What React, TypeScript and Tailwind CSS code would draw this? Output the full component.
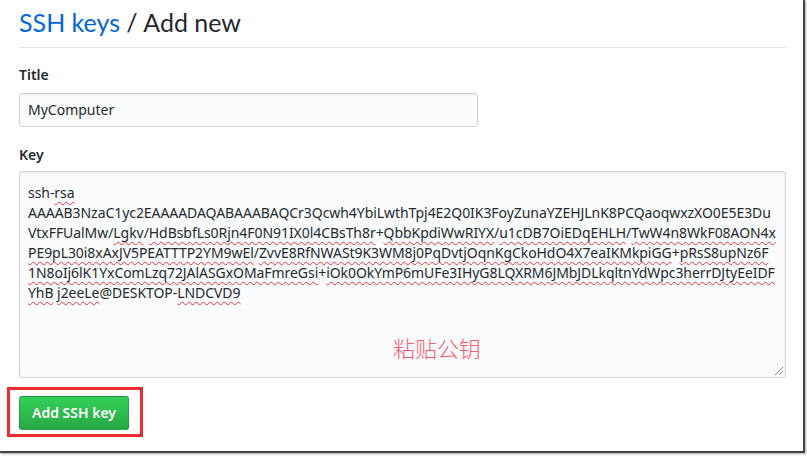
import React from "react";

const U = ({ children }: { children: React.ReactNode }) => (
  <span className="underline decoration-wavy decoration-[#e8343c] decoration-1 underline-offset-[3px]">
    {children}
  </span>
);

export default function App() {
  const body = { fontFamily: '"Noto Sans", "Open Sans", sans-serif' };
  return (
    <div className="w-[807px] h-[456px] bg-white overflow-hidden" style={body}>
      <div className="w-[805px] h-[453px] border-r-2 border-b-2 border-[#454545] shadow-[1px_1px_2px_rgba(0,0,0,0.35)] bg-white px-[19px] pt-[5px]">
        <div className="w-[767px] border-b border-[#e1e4e8] pb-[10px]">
          <h1
            className="text-[25px] leading-[32px] font-normal text-[#24292e] pt-[1px] h-[32px]"
            style={{ fontFamily: 'Lato, "Noto Sans", sans-serif' }}
          >
            <span className="text-[#0366d6]">SSH keys</span> / Add new
          </h1>
        </div>

        <div className="mt-[17px] text-[14px] leading-[20px] font-semibold text-[#24292e]">Title</div>
        <div className="mt-[8px] w-[459px] h-[34px] rounded-[3px] border border-[#d1d5da] bg-[#fafbfc] shadow-[inset_0_1px_2px_rgba(27,31,35,0.075)] px-[8px] flex items-center text-[14px] leading-[20px] text-[#24292e]">
          MyComputer
        </div>

        <div className="mt-[18px] text-[14px] leading-[20px] font-semibold text-[#24292e]">Key</div>
        <div className="relative mt-[6px] w-[767px] h-[207px] rounded-[3px] border border-[#d1d5da] bg-[#fafbfc] shadow-[inset_0_1px_2px_rgba(27,31,35,0.075)] pl-[8px] pt-[11px] text-[14px] leading-[20px] tracking-[-0.06px] text-[#24292e]">
          <div className="whitespace-nowrap">
            ssh-<U>rsa</U>
          </div>
          <div className="whitespace-nowrap">
            AAAAB3NzaC1yc2EAAAADAQABAAABAQCr3Qcwh4YbiLwthTpj4E2Q0IK3FoyZunaYZEHJLnK8PCQaoqwxzXO0E5E3Du
          </div>
          <div className="whitespace-nowrap">
            VtxFFUalMw/<U>Lgkv</U>/<U>HdBsbfLs0Rjn4F0N91IX0l4CBsTh8r</U>+<U>QbbKpdiWwRIYX</U>/<U>u1cDB7OiEDqEHLH</U>/<U>TwW4n8WkF08AON4x</U>
          </div>
          <div className="whitespace-nowrap">
            <U>PE9pL30i8xAxJV5PEATTTP2YM9wEl</U>/<U>ZvvE8RfNWASt9K3WM8j0PqDvtjOqnKgCkoHdO4X7eaIKMkpiGG</U>+<U>pRsS8upNz6F</U>
          </div>
          <div className="whitespace-nowrap">
            <U>1N8oIj6lK1YxComLzq72JAlASGxOMaFmreGsi</U>+<U>iOk0OkYmP6mUFe3IHyG8LQXRM6JMbJDLkqltnYdWpc3herrDJtyEeIDF</U>
          </div>
          <div className="whitespace-nowrap">
            <U>YhB</U> <U>j2eeLe</U>@DESKTOP-<U>LNDCVD9</U>
          </div>

          <div
            className="absolute left-[373px] top-[164px] text-[22px] leading-[22px] font-light text-[#ff5a6a]"
            style={{ fontFamily: '"Noto Sans CJK SC", sans-serif' }}
          >
            粘贴公钥
          </div>

          <svg className="absolute right-[1px] bottom-[1px]" width="10" height="10" viewBox="0 0 10 10">
            <line x1="1" y1="9" x2="9" y2="1" stroke="#8a8a8a" strokeWidth="1" />
            <line x1="5" y1="9" x2="9" y2="5" stroke="#8a8a8a" strokeWidth="1" />
          </svg>
        </div>

        <div className="-ml-[12px] mt-[9px] w-[136px] h-[50px] border-[3px] border-[#ec2a30] pl-[9px] pt-[6px]">
          <button className="w-[110px] h-[34px] rounded-[3px] border border-[rgba(27,31,35,0.2)] bg-gradient-to-b from-[#34d058] to-[#28a745] text-white text-[14px] font-semibold leading-[20px]">
            Add SSH key
          </button>
        </div>
      </div>
    </div>
  );
}
